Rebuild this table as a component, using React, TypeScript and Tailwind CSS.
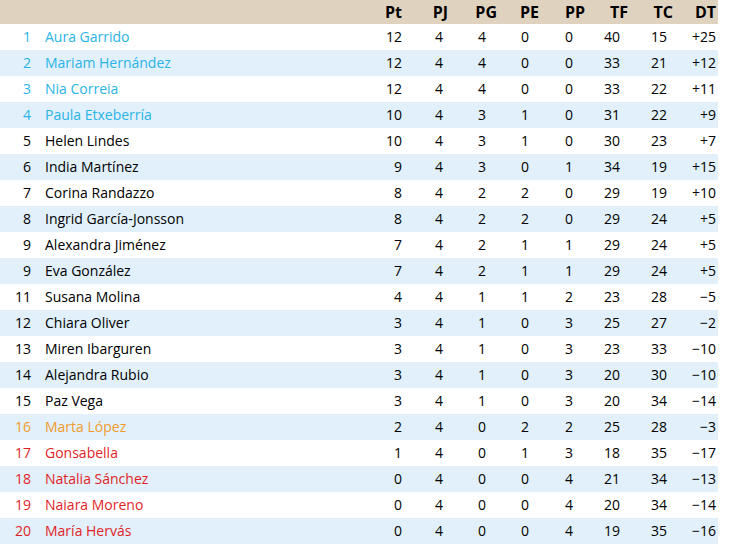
import React from "react";

type Row = {
  pos: number;
  name: string;
  pt: number;
  pj: number;
  pg: number;
  pe: number;
  pp: number;
  tf: number;
  tc: number;
  dt: string;
  zone?: "top" | "mid" | "down";
};

const rows: Row[] = [
  { pos: 1, name: "Aura Garrido", pt: 12, pj: 4, pg: 4, pe: 0, pp: 0, tf: 40, tc: 15, dt: "+25", zone: "top" },
  { pos: 2, name: "Mariam Hernández", pt: 12, pj: 4, pg: 4, pe: 0, pp: 0, tf: 33, tc: 21, dt: "+12", zone: "top" },
  { pos: 3, name: "Nia Correia", pt: 12, pj: 4, pg: 4, pe: 0, pp: 0, tf: 33, tc: 22, dt: "+11", zone: "top" },
  { pos: 4, name: "Paula Etxeberría", pt: 10, pj: 4, pg: 3, pe: 1, pp: 0, tf: 31, tc: 22, dt: "+9", zone: "top" },
  { pos: 5, name: "Helen Lindes", pt: 10, pj: 4, pg: 3, pe: 1, pp: 0, tf: 30, tc: 23, dt: "+7" },
  { pos: 6, name: "India Martínez", pt: 9, pj: 4, pg: 3, pe: 0, pp: 1, tf: 34, tc: 19, dt: "+15" },
  { pos: 7, name: "Corina Randazzo", pt: 8, pj: 4, pg: 2, pe: 2, pp: 0, tf: 29, tc: 19, dt: "+10" },
  { pos: 8, name: "Ingrid García‑Jonsson", pt: 8, pj: 4, pg: 2, pe: 2, pp: 0, tf: 29, tc: 24, dt: "+5" },
  { pos: 9, name: "Alexandra Jiménez", pt: 7, pj: 4, pg: 2, pe: 1, pp: 1, tf: 29, tc: 24, dt: "+5" },
  { pos: 9, name: "Eva González", pt: 7, pj: 4, pg: 2, pe: 1, pp: 1, tf: 29, tc: 24, dt: "+5" },
  { pos: 11, name: "Susana Molina", pt: 4, pj: 4, pg: 1, pe: 1, pp: 2, tf: 23, tc: 28, dt: "−5" },
  { pos: 12, name: "Chiara Oliver", pt: 3, pj: 4, pg: 1, pe: 0, pp: 3, tf: 25, tc: 27, dt: "−2" },
  { pos: 13, name: "Miren Ibarguren", pt: 3, pj: 4, pg: 1, pe: 0, pp: 3, tf: 23, tc: 33, dt: "−10" },
  { pos: 14, name: "Alejandra Rubio", pt: 3, pj: 4, pg: 1, pe: 0, pp: 3, tf: 20, tc: 30, dt: "−10" },
  { pos: 15, name: "Paz Vega", pt: 3, pj: 4, pg: 1, pe: 0, pp: 3, tf: 20, tc: 34, dt: "−14" },
  { pos: 16, name: "Marta López", pt: 2, pj: 4, pg: 0, pe: 2, pp: 2, tf: 25, tc: 28, dt: "−3", zone: "mid" },
  { pos: 17, name: "Gonsabella", pt: 1, pj: 4, pg: 0, pe: 1, pp: 3, tf: 18, tc: 35, dt: "−17", zone: "down" },
  { pos: 18, name: "Natalia Sánchez", pt: 0, pj: 4, pg: 0, pe: 0, pp: 4, tf: 21, tc: 34, dt: "−13", zone: "down" },
  { pos: 19, name: "Naiara Moreno", pt: 0, pj: 4, pg: 0, pe: 0, pp: 4, tf: 20, tc: 34, dt: "−14", zone: "down" },
  { pos: 20, name: "María Hervás", pt: 0, pj: 4, pg: 0, pe: 0, pp: 4, tf: 19, tc: 35, dt: "−16", zone: "down" },
];

const zoneColor = {
  top: "text-[#2ab4e6]",
  mid: "text-[#f29b2c]",
  down: "text-[#e01e28]",
};

// grid columns: rank | name | Pt PJ PG PE PP TF TC DT
const gridCols =
  "grid grid-cols-[36px_324px_44px_46px_49px_42px_46px_43px_45px_43px]";

function App() {
  return (
    <div className="w-[732px] h-[546px] bg-white font-['Open_Sans',sans-serif] text-[14px] text-black">
      <div className="w-[718px]">
        {/* HEADER */}
        <div className={`${gridCols} h-6 items-center bg-[#dfd3c0] text-[16px] font-bold`}>
          <div />
          <div />
          <div className="text-right pr-[2px]">Pt</div>
          <div className="text-right pr-[2px]">PJ</div>
          <div className="text-right pr-[2px]">PG</div>
          <div className="text-right pr-[2px]">PE</div>
          <div className="text-right pr-[2px]">PP</div>
          <div className="text-right pr-[2px]">TF</div>
          <div className="text-right pr-[2px]">TC</div>
          <div className="text-right pr-[2px]">DT</div>
        </div>

        {/* ROWS */}
        {rows.map((r, i) => (
          <div
            key={r.name}
            className={`${gridCols} h-[26px] pb-px items-center ${i % 2 === 1 ? "bg-[#e1f0fb]" : "bg-white"}`}
          >
            <div className={`text-right pr-[5px] ${r.zone ? zoneColor[r.zone] : ""}`}>{r.pos}</div>
            <div className={`pl-[9px] whitespace-nowrap ${r.zone ? zoneColor[r.zone] : ""}`}>{r.name}</div>
            <div className="text-right pr-[2px]">{r.pt}</div>
            <div className="text-right pr-[7px]">{r.pj}</div>
            <div className="text-right pr-[13px]">{r.pg}</div>
            <div className="text-right pr-[12px]">{r.pe}</div>
            <div className="text-right pr-[14px]">{r.pp}</div>
            <div className="text-right pr-[10px]">{r.tf}</div>
            <div className="text-right pr-[8px]">{r.tc}</div>
            <div className="text-right pr-[2px]">{r.dt}</div>
          </div>
        ))}
      </div>
    </div>
  );
}

export default App;
